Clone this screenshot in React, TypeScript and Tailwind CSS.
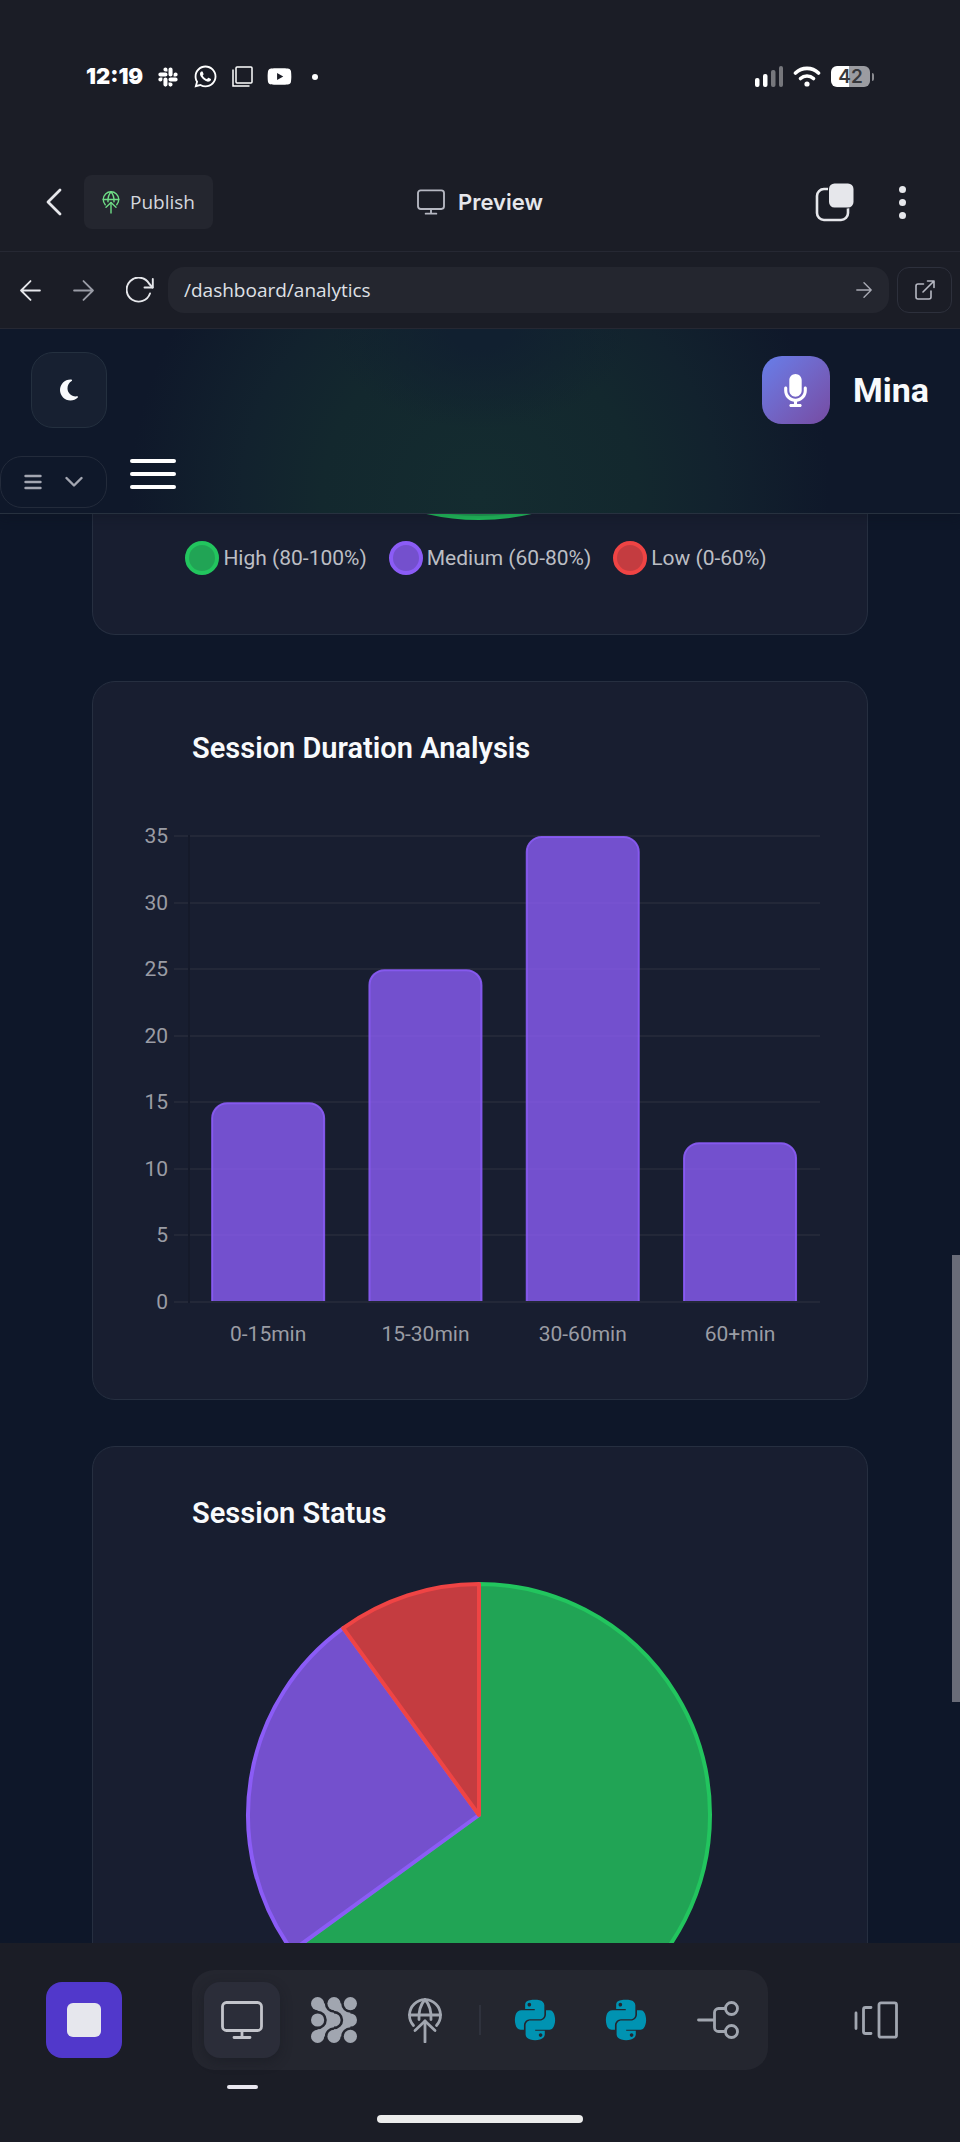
import type { ReactNode } from "react";
import { FaPython, FaSlack, FaWhatsapp, FaYoutube } from "react-icons/fa";
import { FaMicrophone, FaMoon } from "react-icons/fa6";

function GlobeUpIcon({ className }: { className?: string }) {
  return (
    <svg viewBox="0 0 36 46" fill="none" stroke="currentColor" strokeWidth="2.8" strokeLinecap="round" strokeLinejoin="round" className={className} aria-hidden="true">
      <path d="M6.5 28.5A15.5 15.5 0 1 1 29.5 28.5" />
      <path d="M2.5 18H33.5" />
      <path d="M18 2.5C14 7 11.5 13 12 22.5" />
      <path d="M18 2.5C22 7 24.5 13 24 22.5" />
      <path d="M18 45V24" />
      <path d="M8 33.5L18 24L28 33.5" />
    </svg>
  );
}

function MonitorIcon({ className }: { className?: string }) {
  return (
    <svg viewBox="0 0 42 38" fill="none" stroke="currentColor" strokeWidth="2.8" strokeLinecap="round" className={className} aria-hidden="true">
      <rect x="1.5" y="1.5" width="39" height="28" rx="4" />
      <path d="M21 29.5V36.5M13 36.5H29" />
    </svg>
  );
}

const DOTS = [6.6, 23, 39.4];
const LINK = "M0 0H7.2A9.2 9.2 0 0 0 16.4 9.2V16.4H9.2A9.2 9.2 0 0 0 0 7.2Z";

function AgentIcon() {
  return (
    <svg viewBox="0 0 46 46" fill="currentColor" className="size-[46px]" aria-hidden="true">
      {DOTS.map((x) => DOTS.map((y) => <circle key={`${x}-${y}`} cx={x} cy={y} r="6.6" />))}
      <path d={LINK} transform="translate(6.6 6.6)" />
      <path d={LINK} transform="translate(23 6.6)" />
      <path d={LINK} transform="translate(6.6 39.4) scale(1 -1)" />
      <path d={LINK} transform="translate(23 39.4) scale(1 -1)" />
    </svg>
  );
}

function ArrowIcon({ className }: { className?: string }) {
  return (
    <svg viewBox="0 0 20 20" fill="none" stroke="currentColor" strokeWidth="1.7" strokeLinecap="round" strokeLinejoin="round" className={className} aria-hidden="true">
      <path d="M1 10H19M10 1L19 10L10 19" />
    </svg>
  );
}

function StatusBar() {
  return (
    <div className="flex h-[153px] shrink-0 items-center justify-between pr-[86px] pl-[86px] text-white">
      <div className="flex items-center gap-[14px]">
        <span className="font-['Inter',sans-serif] text-[22px] font-black">12:19</span>
        <FaSlack className="size-[22px]" />
        <FaWhatsapp className="size-[25px]" />
        <svg viewBox="0 0 21 21" fill="none" stroke="currentColor" strokeWidth="1.5" className="size-[21px]" aria-hidden="true">
          <rect x="4" y="1" width="16" height="16" rx="1" />
          <path d="M1 3.5V20H17.5" />
        </svg>
        <FaYoutube className="size-[25px]" />
        <span className="ml-1.5 size-1.5 rounded-full bg-white" />
      </div>
      <div className="flex items-center gap-[10px]">
        <svg viewBox="0 0 28 21" fill="currentColor" className="h-[21px] w-7" aria-hidden="true">
          <rect x="0" y="12" width="4.5" height="9" rx="2" />
          <rect x="8" y="8" width="4.5" height="13" rx="2" />
          <rect x="16" y="4" width="4.5" height="17" rx="2" opacity="0.4" />
          <rect x="24" y="0" width="4" height="21" rx="2" opacity="0.4" />
        </svg>
        <svg viewBox="0 0 28 21" fill="none" stroke="currentColor" strokeWidth="3.6" strokeLinecap="round" className="h-[21px] w-7" aria-hidden="true">
          <path d="M2.5 7A16.5 16.5 0 0 1 25.5 7" />
          <path d="M7.5 12.5A9.5 9.5 0 0 1 20.5 12.5" />
          <circle cx="14" cy="18" r="2.6" fill="currentColor" stroke="none" />
        </svg>
        <div className="flex items-center gap-0.5">
          <span className="flex h-[21px] w-[39px] items-center justify-center rounded-md bg-linear-to-r from-white from-46% to-[#9b9ca1] to-46% font-['Inter',sans-serif] text-[19px] leading-none font-semibold text-[#37383c]">
            42
          </span>
          <span className="h-2 w-0.5 rounded-r-sm bg-[#8a8b90]" />
        </div>
      </div>
    </div>
  );
}

function Toolbar() {
  return (
    <div className="grid h-[99px] shrink-0 grid-cols-[1fr_auto_1fr] items-center border-b border-[#262833] px-[46px] text-[#e6e7eb]">
      <div className="flex items-center gap-[22px]">
        <button type="button" aria-label="Back">
          <svg viewBox="0 0 16 28" fill="none" stroke="currentColor" strokeWidth="2.8" strokeLinecap="round" strokeLinejoin="round" className="h-7 w-4" aria-hidden="true">
            <path d="M14 2L2 14L14 26" />
          </svg>
        </button>
        <button type="button" className="flex h-[54px] items-center gap-[10px] rounded-lg bg-[#24262f] px-[18px] font-['Open_Sans',sans-serif] text-[19px] text-[#d5d7de]">
          <GlobeUpIcon className="h-6 w-[18px] text-[#6fdd86]" />
          Publish
        </button>
      </div>
      <div className="flex items-center gap-[13px]">
        <MonitorIcon className="h-[26px] w-7 text-[#b6b8c2]" />
        <span className="font-['Inter',sans-serif] text-[22px] font-semibold">Preview</span>
      </div>
      <div className="flex items-center justify-end gap-10 pr-1">
        <button type="button" aria-label="Tabs">
          <svg viewBox="0 0 39 39" className="size-[39px]" aria-hidden="true">
            <rect x="2" y="6" width="31" height="31" rx="7" fill="none" stroke="currentColor" strokeWidth="2.6" />
            <rect x="13" y="-0.5" width="26" height="26" rx="6.5" fill="#1b1d26" />
            <rect x="14" y="0.500" width="24.500" height="24" rx="5.500" fill="currentColor" />
          </svg>
        </button>
        <button type="button" aria-label="More options" className="flex w-4 flex-col items-center gap-[6px]">
          <span className="size-[7px] rounded-full bg-current" />
          <span className="size-[7px] rounded-full bg-current" />
          <span className="size-[7px] rounded-full bg-current" />
        </button>
      </div>
    </div>
  );
}

function AddressBar() {
  return (
    <div className="flex h-[77px] shrink-0 items-center gap-2 border-b border-[#262833] pr-2 pl-5 text-[#e6e7eb]">
      <div className="flex items-center gap-8 pr-1.5">
        <button type="button" aria-label="Go back">
          <ArrowIcon className="size-[21px] rotate-180" />
        </button>
        <button type="button" aria-label="Go forward" className="text-[#9a9ca6]">
          <ArrowIcon className="size-[21px]" />
        </button>
        <button type="button" aria-label="Reload">
          <svg viewBox="0 0 28 26" fill="none" stroke="currentColor" strokeWidth="1.9" strokeLinecap="round" strokeLinejoin="round" className="h-[26px] w-7" aria-hidden="true">
            <path d="M24 16.5A12 12 0 1 1 23 6.5L26.5 10.5" />
            <path d="M26.8 2V10.5H18.5" />
          </svg>
        </button>
      </div>
      <div className="flex h-[46px] flex-1 items-center rounded-2xl bg-[#24262f] pr-[17px] pl-4">
        <input
          aria-label="Page address"
          defaultValue="/dashboard/analytics"
          className="min-w-0 flex-1 bg-transparent font-['Open_Sans',sans-serif] text-[19px] text-[#dfe0e6] outline-none"
        />
        <ArrowIcon className="size-4 text-[#a9abb5]" />
      </div>
      <button type="button" aria-label="Open in new tab" className="flex h-[46px] w-[55px] items-center justify-center rounded-xl border border-[#2d303c] text-[#b6b8c2]">
        <svg viewBox="0 0 20 20" fill="none" stroke="currentColor" strokeWidth="1.6" strokeLinecap="round" strokeLinejoin="round" className="size-5" aria-hidden="true">
          <path d="M8.5 4H3A2 2 0 0 0 1 6V17A2 2 0 0 0 3 19H14A2 2 0 0 0 16 17V11" />
          <path d="M12.5 1H19V7.5M19 1L8 12" />
        </svg>
      </button>
    </div>
  );
}

function AppHeader() {
  return (
    <header className="relative z-10 shrink-0 border-b border-[#27313f] bg-[radial-gradient(ellipse_150px_100px_at_50%_0,#112030_20%,transparent),radial-gradient(ellipse_350px_340px_at_50%_90%,#142c30,#13282e_45%,#12222e_68%,#0f182a_100%)] pt-[23px] pb-[5px] shadow-[0_5px_10px_rgba(10,14,26,0.25)]">
      <div className="flex items-center justify-between px-[31px]">
        <button type="button" aria-label="Dark mode" className="flex size-[76px] items-center justify-center rounded-[22px] border border-[#24303f] bg-[#172031] text-[#f8fafc]">
          <FaMoon className="size-6" />
        </button>
        <a href="#" className="flex items-center gap-[23px]">
          <span className="flex size-[68px] items-center justify-center rounded-[20px] bg-linear-135 from-[#667eea] to-[#764ba2] text-white">
            <FaMicrophone className="size-[33px]" />
          </span>
          <span className="font-['Roboto',sans-serif] text-[34px] leading-10 font-bold text-[#f8fafc]">Mina</span>
        </a>
      </div>
      <div className="mt-7 flex gap-[23px]">
        <button type="button" aria-label="Section menu" className="flex h-[52px] w-[107px] items-center justify-between rounded-[22px] border border-[#232b3b] px-[23px] text-[#a3a6b1]">
          <svg viewBox="0 0 18 16" fill="none" stroke="currentColor" strokeWidth="2.4" strokeLinecap="round" className="h-4 w-[18px]" aria-hidden="true">
            <path d="M1.5 2H16.5M1.5 8H16.5M1.5 14H16.5" />
          </svg>
          <svg viewBox="0 0 18 12" fill="none" stroke="currentColor" strokeWidth="2.4" strokeLinecap="round" strokeLinejoin="round" className="h-3 w-[18px]" aria-hidden="true">
            <path d="M1.5 2L9 9.5L16.5 2" />
          </svg>
        </button>
        <button type="button" aria-label="Open navigation" className="flex h-9 w-[46px] flex-col gap-[9px] pt-[3px]">
          <span className="h-1 w-full shrink-0 rounded-sm bg-white" />
          <span className="h-1 w-full shrink-0 rounded-sm bg-white" />
          <span className="h-1 w-full shrink-0 rounded-sm bg-white" />
        </button>
      </div>
    </header>
  );
}

const LEGEND = [
  { label: "High (80-100%)", swatch: "border-[#22c55e] bg-[#21a455]" },
  { label: "Medium (60-80%)", swatch: "border-[#8b5cf6] bg-[#7450cd]" },
  { label: "Low (0-60%)", swatch: "border-[#ef4444] bg-[#c43c40]" },
];

function ConfidenceCard() {
  return (
    <section className="shrink-0 rounded-b-[23px] border border-t-0 border-[#262f40] bg-[#181e30] pb-[59px]">
      <svg viewBox="0 0 774 6" className="block w-full" aria-hidden="true">
        <circle cx="386" cy="-227" r="231" fill="#21a455" stroke="#22c55e" strokeWidth="4" />
      </svg>
      <ul className="mt-[21px] mr-2 flex justify-center gap-[22px]">
        {LEGEND.map((item) => (
          <li key={item.label} className="flex items-center gap-1 font-['Roboto',sans-serif] text-[21px] leading-[34px] text-[#bcbec4]">
            <span className={`size-[34px] rounded-full border-4 ${item.swatch}`} />
            {item.label}
          </li>
        ))}
      </ul>
    </section>
  );
}

function ChartCard({ title, children }: { title: string; children: ReactNode }) {
  return (
    <section className="shrink-0 rounded-[23px] border border-[#262f40] bg-[#181e30] pt-12">
      <h2 className="px-[99px] font-['Roboto',sans-serif] text-[29px] leading-9 font-semibold text-[#f8fafc]">{title}</h2>
      {children}
    </section>
  );
}

const DURATIONS = [
  { label: "0-15min", value: 15 },
  { label: "15-30min", value: 25 },
  { label: "30-60min", value: 35 },
  { label: "60+min", value: 12 },
];
const TICKS = [0, 5, 10, 15, 20, 25, 30, 35];
const BASE = 536;
const UNIT = 466 / 35;
const STEP = 157.3;
const BAR = 112;

function DurationChart() {
  return (
    <svg viewBox="0 0 774 633" className="block w-full font-['Roboto',sans-serif] text-[21px]" role="img" aria-label="Sessions by duration">
      {TICKS.map((tick) => {
        const y = Math.round(BASE - tick * UNIT);
        return (
          <g key={tick}>
            <path d={`M81 ${y}H95M97 ${y}H727`} stroke="#232838" strokeWidth="2" />
            <text x="75" y={y + 7} textAnchor="end" fill="#9a9ca4">
              {tick}
            </text>
          </g>
        );
      })}
      <path d="M96 69V537" stroke="#151a2a" strokeWidth="2" />
      {DURATIONS.map((d, i) => {
        const x = 96.5 + STEP * i + (STEP - BAR) / 2;
        const top = BASE - d.value * UNIT + 1;
        const shape = `M${x} ${BASE - 1}V${top + 15}a15 15 0 0 1 15 -15H${x + BAR - 15}a15 15 0 0 1 15 15V${BASE - 1}`;
        return (
          <g key={d.label}>
            <path d={shape} fill="#8b5cf6" fillOpacity="0.8" stroke="#8b5cf6" strokeWidth="2" strokeOpacity="0.9" />
            <text x={96.5 + STEP * (i + 0.5)} y="575" textAnchor="middle" fill="#9a9ca4">
              {d.label}
            </text>
          </g>
        );
      })}
    </svg>
  );
}

const SLICES = [
  { from: 0, to: 0.65, fill: "#21a455", stroke: "#22c55e" },
  { from: 0.65, to: 0.9, fill: "#7450cd", stroke: "#8b5cf6" },
  { from: 0.9, to: 1, fill: "#c43c40", stroke: "#ef4444" },
];

function StatusChart() {
  const point = (t: number) => {
    const a = t * 2 * Math.PI;
    return `${386 + 231 * Math.sin(a)} ${284 - 231 * Math.cos(a)}`;
  };
  return (
    <svg viewBox="0 0 774 633" className="block w-full" role="img" aria-label="Sessions by status">
      {SLICES.map((s) => (
        <path
          key={s.fill}
          d={`M386 284L${point(s.from)}A231 231 0 ${s.to - s.from > 0.5 ? 1 : 0} 1 ${point(s.to)}Z`}
          fill={s.fill}
          stroke={s.stroke}
          strokeWidth="4"
          strokeLinejoin="round"
        />
      ))}
    </svg>
  );
}

function TabButton({ label, active, children }: { label: string; active?: boolean; children: ReactNode }) {
  return (
    <button
      type="button"
      aria-label={label}
      className={`relative flex size-[76px] items-center justify-center rounded-2xl ${active ? "bg-[#2b2d39] text-[#c3c4cb] shadow-[0_4px_12px_rgba(20,22,30,0.4)]" : "text-[#a1a6b0]"}`}
    >
      {children}
      {active && <span className="absolute top-[103px] left-[23px] h-1 w-[31px] rounded-full bg-[#e9e7f0]" />}
    </button>
  );
}

function BottomNav() {
  return (
    <nav className="shrink-0 px-[46px] pt-[27px] pb-[19px]">
      <div className="flex items-center justify-between">
        <button type="button" aria-label="Stop" className="flex size-[76px] items-center justify-center rounded-2xl bg-[#5138cb]">
          <span className="size-[34px] rounded-md bg-[#e6e7ed]" />
        </button>
        <div className="flex h-[100px] w-[576px] items-center justify-between rounded-[22px] bg-[#24262f] px-3">
          <TabButton label="Preview" active>
            <MonitorIcon className="h-[38px] w-[42px]" />
          </TabButton>
          <TabButton label="Agent">
            <AgentIcon />
          </TabButton>
          <TabButton label="Publishing">
            <GlobeUpIcon className="h-[46px] w-9" />
          </TabButton>
          <span className="h-[30px] w-0.5 bg-[#2f323d]" />
          <TabButton label="Python file">
            <FaPython className="size-[46px] text-[#0093b2]" />
          </TabButton>
          <TabButton label="Second Python file">
            <FaPython className="size-[46px] text-[#0093b2]" />
          </TabButton>
          <TabButton label="Version control">
            <svg viewBox="0 0 42 38" fill="none" stroke="currentColor" strokeWidth="2.8" strokeLinecap="round" strokeLinejoin="round" className="h-[38px] w-[42px]" aria-hidden="true">
              <path d="M1.5 19H17.5M28.5 7.5H21.5A4 4 0 0 0 17.5 11.5V26.5A4 4 0 0 0 21.5 30.5H28.5" />
              <circle cx="34.5" cy="7.5" r="6" />
              <circle cx="34.5" cy="30.5" r="6" />
            </svg>
          </TabButton>
        </div>
        <button type="button" aria-label="Switch layout" className="flex size-[76px] items-center justify-center text-[#a1a6b0]">
          <svg viewBox="0 0 44 38" fill="none" stroke="currentColor" strokeWidth="2.8" strokeLinecap="round" strokeLinejoin="round" className="h-[38px] w-11" aria-hidden="true">
            <path d="M2 12V27.5M17 6.5H11.5A2 2 0 0 0 9.5 8.5V30.5A2 2 0 0 0 11.5 32.5H17" />
            <rect x="25" y="1.8" width="17.5" height="34.4" rx="2" />
          </svg>
        </button>
      </div>
      <div className="mx-auto mt-[45px] h-2 w-[206px] rounded-full bg-[#ececec]" />
    </nav>
  );
}

export default function App() {
  return (
    <div className="flex h-screen flex-col overflow-hidden bg-[#1b1d26]">
      <StatusBar />
      <Toolbar />
      <AddressBar />
      <main className="relative flex min-h-0 flex-1 flex-col overflow-hidden bg-[#0e1729]">
        <AppHeader />
        <div className="flex min-h-0 flex-1 flex-col gap-[46px] overflow-hidden px-[92px]">
          <ConfidenceCard />
          <ChartCard title="Session Duration Analysis">
            <DurationChart />
          </ChartCard>
          <ChartCard title="Session Status">
            <StatusChart />
          </ChartCard>
        </div>
        <div className="absolute top-[57.4%] right-0 h-[27.7%] w-2 bg-[#696c78]" />
      </main>
      <BottomNav />
    </div>
  );
}
